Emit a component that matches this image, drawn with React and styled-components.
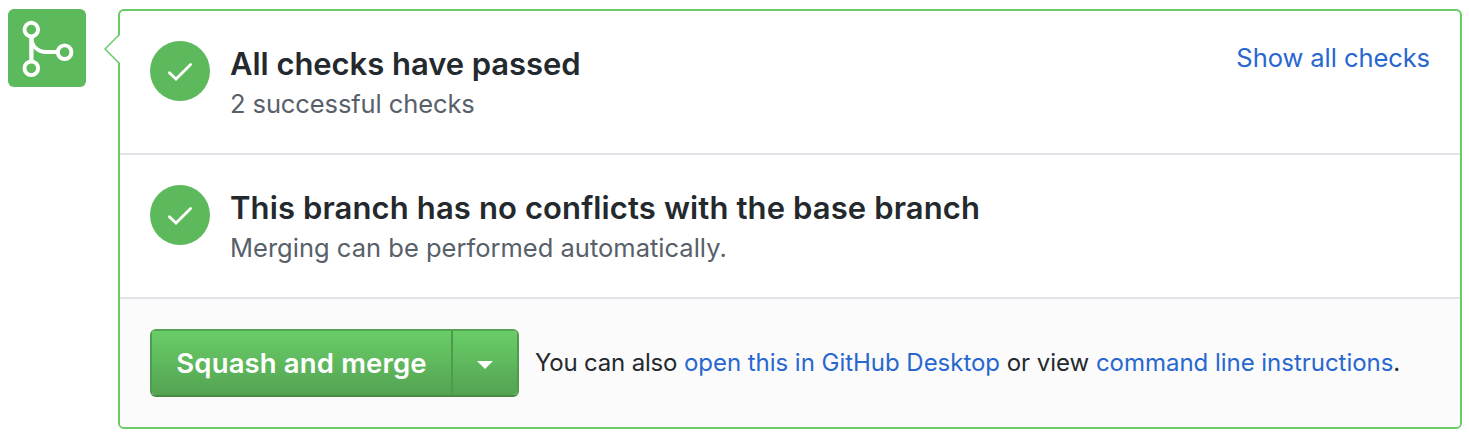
import React from "react";
import styled, { createGlobalStyle } from "styled-components";

const GlobalStyle = createGlobalStyle`
  * { box-sizing: border-box; }
  body {
    margin: 0;
    background: #fff;
    color: #24292e;
    font-family: Inter, "Liberation Sans", sans-serif;
    -webkit-font-smoothing: antialiased;
  }
`;

const Page = styled.main`
  display: flex;
  align-items: flex-start;
  gap: 32px;
  padding: 9px 7px 10px 8px;
`;

const MergeBadge = styled.div`
  flex: none;
  width: 78px;
  height: 78px;
  border-radius: 6px;
  background: #5dba5c;
  svg { display: block; }
`;

const Panel = styled.section`
  position: relative;
  flex: 1;
  height: 420px;
  display: flex;
  flex-direction: column;
  border: 2px solid #6aca68;
  border-radius: 6px;
`;

const Pointer = styled.svg`
  position: absolute;
  left: -16px;
  top: 22px;
`;

const CheckRow = styled.div`
  display: flex;
  height: 144px;
  padding: 30px;
  border-bottom: 2px solid #e1e4e8;
`;

const CheckCircle = styled.div`
  flex: none;
  width: 60px;
  height: 60px;
  margin-right: 20px;
  border-radius: 50%;
  background: #5dba5c;
  svg { display: block; }
`;

const CheckText = styled.div`
  flex: 1;
  white-space: nowrap;
`;

const Heading = styled.h3`
  margin: 0;
  padding: 2px 0 1px;
  font-size: 31px;
  line-height: 41px;
  font-weight: 600;
  letter-spacing: ${(p) => p.$tracking};
`;

const Meta = styled.p`
  margin: 0;
  color: #586069;
  font-size: 25.5px;
  line-height: 37px;
  letter-spacing: ${(p) => p.$tracking};
`;

const Link = styled.a`
  color: #2767cf;
  text-decoration: none;
  cursor: pointer;
`;

const ShowAll = styled(Link)`
  font-size: 25.5px;
  line-height: 33px;
  letter-spacing: -0.07px;
  white-space: nowrap;
`;

const Footer = styled.div`
  flex: 1;
  display: flex;
  align-items: center;
  padding: 0 30px;
  background: #fbfbfb;
  border-radius: 0 0 4px 4px;
`;

const ButtonGroup = styled.div`
  display: flex;
  flex: none;
  width: 369px;
  height: 68px;
  border: 2px solid;
  border-color: #55a453 #4f9c4e #458d45 #4f9c4e;
  border-radius: 6px;
  background: linear-gradient(#69cd67, #54a352) padding-box;
`;

const MergeButton = styled.button`
  flex: none;
  width: 301px;
  border: 0;
  border-right: 2px solid #4d9c4c;
  padding: 0 0 1px;
  background: none;
  color: #fff;
  font: 600 27.5px/40px Inter, "Liberation Sans", sans-serif;
  letter-spacing: 0.14px;
  white-space: nowrap;
`;

const MenuButton = styled.button`
  flex: 1;
  display: flex;
  align-items: center;
  justify-content: center;
  border: 0;
  padding: 4px 0 0;
  background: none;
`;

const Hint = styled.p`
  margin: 0 0 0 16px;
  font-size: 24px;
  line-height: 36px;
  letter-spacing: -0.03px;
  white-space: nowrap;
`;

const HintLead = styled.span`
  letter-spacing: -0.18px;
`;

function MergeIcon() {
  return (
    <svg width="78" height="78" viewBox="0 0 78 78" fill="none" stroke="#fff">
      <path d="M23.4 27v26" strokeWidth="4.3" />
      <path d="M23.4 28c0 9 6 15 15 15h12" strokeWidth="3.8" />
      <g strokeWidth="3.9" fill="#5dba5c">
        <circle cx="23.3" cy="20.6" r="6.8" />
        <circle cx="56.6" cy="43.2" r="6.8" />
        <circle cx="23.3" cy="59.3" r="6.8" />
      </g>
    </svg>
  );
}

function Passed() {
  return (
    <CheckCircle>
      <svg width="60" height="60" viewBox="0 0 60 60" fill="none" stroke="#fff" strokeWidth="2.8" strokeLinecap="round">
        <path d="M19.4 31.7L26 38.1L40.6 23.4" />
      </svg>
    </CheckCircle>
  );
}

export default function App() {
  return (
    <>
      <GlobalStyle />
      <Page>
        <MergeBadge><MergeIcon /></MergeBadge>
        <Panel>
          <Pointer width="17" height="32" viewBox="0 0 17 32">
            <path d="M16.5 1.3L1.3 16L16.5 30.7Z" fill="#fff" />
            <path d="M15.2 1.8L1 16L15.2 30.2" fill="none" stroke="#6aca68" strokeWidth="1.5" />
          </Pointer>
          <CheckRow>
            <Passed />
            <CheckText>
              <Heading $tracking="-0.05px">All checks have passed</Heading>
              <Meta $tracking="-0.1px">2 successful checks</Meta>
            </CheckText>
            <ShowAll>Show all checks</ShowAll>
          </CheckRow>
          <CheckRow>
            <Passed />
            <CheckText>
              <Heading $tracking="0.12px">This branch has no conflicts with the base branch</Heading>
              <Meta $tracking="0.01px">Merging can be performed automatically.</Meta>
            </CheckText>
          </CheckRow>
          <Footer>
            <ButtonGroup>
              <MergeButton>Squash and merge</MergeButton>
              <MenuButton aria-label="Select merge method">
                <svg width="16" height="8" viewBox="0 0 16 8"><path d="M0 0h16L8 8z" fill="#fff" /></svg>
              </MenuButton>
            </ButtonGroup>
            <Hint>
              <HintLead>You can also </HintLead>
              <Link>open this in GitHub Desktop</Link> or view <Link>command line instructions</Link>.
            </Hint>
          </Footer>
        </Panel>
      </Page>
    </>
  );
}
